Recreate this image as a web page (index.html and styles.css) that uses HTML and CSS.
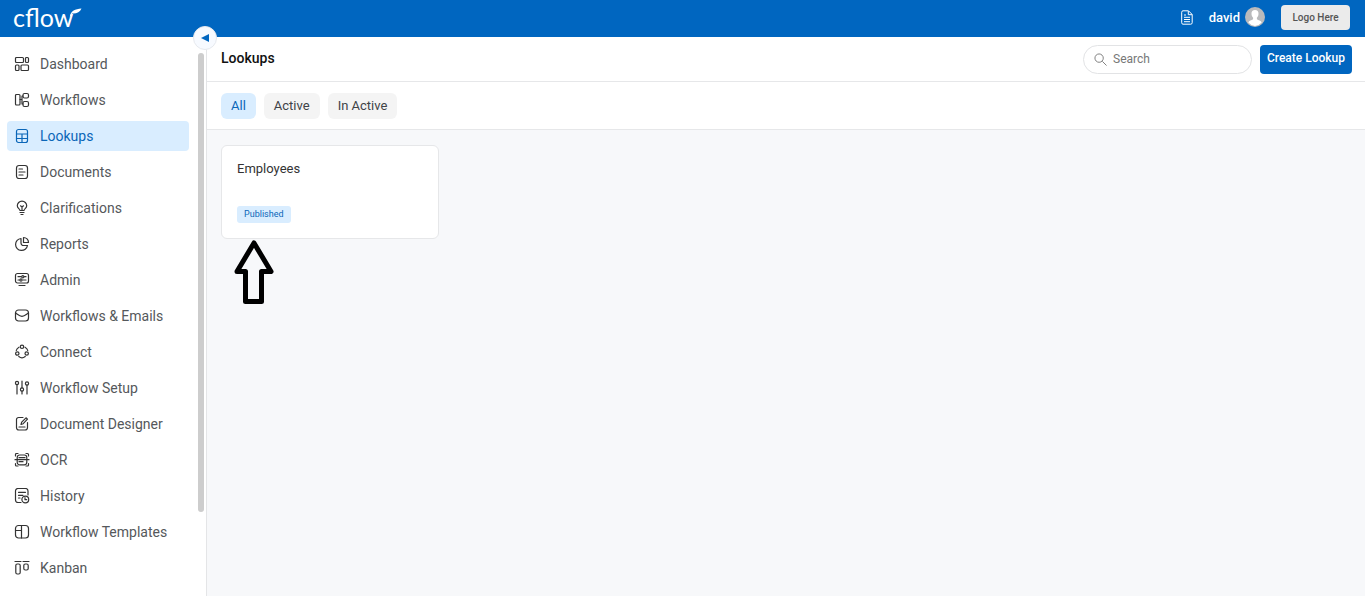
FILE: index.html
```html
<!DOCTYPE html>
<html lang="en">
<head>
<meta charset="utf-8">
<meta name="viewport" content="width=device-width, initial-scale=1">
<title>Lookups - cflow</title>
<link rel="stylesheet" href="styles.css">
</head>
<body>
<div class="app">
  <header class="topbar">
    <a class="brand" href="#" aria-label="cflow">
      <span class="brand-text">cflow</span>
      <svg class="brand-leaf" viewBox="0 0 12 9" aria-hidden="true"><path d="M0 8C1 3 5 1 11.500 .5C10 4.500 6 6 2 5.500L.8 8.500Z"/></svg>
    </a>
    <div class="account">
      <button class="doc-button" type="button" aria-label="Notes">
        <svg class="doc-icon" viewBox="0 0 12 15" aria-hidden="true"><path d="M2 .8h5.500l3.700 3.700v8.200a1.500 1.500 0 0 1-1.500 1.500H2A1.400 1.400 0 0 1 .7 12.700V2.200A1.400 1.400 0 0 1 2 .8ZM7.300 1v3.700H11M3 5h2M3 7.300h6M3 9.500h6M3 11.700h6"/></svg>
      </button>
      <button class="user" type="button">
        <span>david</span>
        <svg class="avatar" viewBox="0 0 20 20" aria-hidden="true"><circle cx="10" cy="10" r="10" fill="#b9babc"/><path d="M10 3c2.300 0 3.700 1.600 3.500 4-.1 1.700-.8 3-1.600 3.700v1.600c1.600 1 4 1.200 4.800 3.300A9.600 9.600 0 0 1 10 19a9.600 9.600 0 0 1-6.700-3.400c.8-2.100 3.200-2.300 4.800-3.300v-1.600C7.300 10 6.600 8.700 6.500 7 6.300 4.600 7.700 3 10 3Z" fill="#fff"/></svg>
      </button>
      <button class="logo-button" type="button">Logo Here</button>
    </div>
  </header>

  <div class="body">
    <aside class="sidebar">
      <nav class="nav" aria-label="Main">
        <a class="nav-item" href="#"><svg class="icon" viewBox="0 0 16 16" aria-hidden="true"><rect x="1.500" y="1.500" width="8" height="5" rx="1"/><rect x="11.500" y="1.500" width="3" height="5" rx="1"/><rect x="1.500" y="9" width="3.500" height="5.500" rx="1"/><rect x="7" y="9" width="7.500" height="5.500" rx="1"/></svg>Dashboard</a>
        <a class="nav-item" href="#"><svg class="icon" viewBox="0 0 16 16" aria-hidden="true"><rect x="1.500" y="2.500" width="4.500" height="10.500" rx="1"/><rect x="9" y="1.500" width="5.500" height="4.500" rx="1.500"/><rect x="9" y="9.500" width="5.500" height="5" rx="1.500"/><path d="M6 7.500h2V4h1M8 7.500V12h1"/></svg>Workflows</a>
        <a class="nav-item active" href="#" aria-current="page"><svg class="icon" viewBox="0 0 16 16" aria-hidden="true"><rect x="2.500" y="1.500" width="11" height="13" rx="2"/><path d="M2.500 6h11M2.500 10.500h11M8 6v8.500"/></svg>Lookups</a>
        <a class="nav-item" href="#"><svg class="icon" viewBox="0 0 16 16" aria-hidden="true"><rect x="2.500" y="1.500" width="11" height="13" rx="2.500"/><path d="M5 5h3.500M5 8h6M5 11h4"/></svg>Documents</a>
        <a class="nav-item" href="#"><svg class="icon" viewBox="0 0 16 16" aria-hidden="true"><path d="M6 10.500C5.800 8.700 3.300 8.400 3.300 5.800a4.700 4.700 0 0 1 9.400 0c0 2.600-2.500 2.900-2.700 4.700ZM8 10V7M6.500 5.800L8 7l1.500-1.200M6 12.500h4M7 14.500h2"/></svg>Clarifications</a>
        <a class="nav-item" href="#"><svg class="icon" viewBox="0 0 16 16" aria-hidden="true"><path d="M7 2.500A6 6 0 1 0 13.500 9.500H9.500A2.500 2.500 0 0 1 7 7ZM9.500 1.500v5h5c0-2.800-2.200-5-5-5Z"/></svg>Reports</a>
        <a class="nav-item" href="#"><svg class="icon" viewBox="0 0 16 16" aria-hidden="true"><rect x="1.500" y="1.500" width="13" height="9.500" rx="2"/><path d="M4 4.700h3M10.500 4.700H12M4 8h1.500M9 8h3M5 13.500h6"/><circle cx="8.800" cy="4.700" r="1.100"/><circle cx="7" cy="8" r="1.100"/></svg>Admin</a>
        <a class="nav-item" href="#"><svg class="icon" viewBox="0 0 16 16" aria-hidden="true"><rect x="1.500" y="2" width="13" height="11" rx="3"/><path d="M1.500 5c2 1 3.500 3.300 6.500 3.300S12.500 6 14.500 5"/></svg>Workflows &amp; Emails</a>
        <a class="nav-item" href="#"><svg class="icon" viewBox="0 0 16 16" aria-hidden="true"><circle cx="8" cy="2.800" r="1.700"/><circle cx="3.300" cy="9.500" r="1.700"/><circle cx="12.700" cy="9.500" r="1.700"/><path d="M5 3.200C3.500 4 2.500 5.300 2.300 6.500M11 3.200c1.500.8 2.500 2.100 2.700 3.300M4.800 12.500c1.800 1.500 4.600 1.500 6.400 0"/></svg>Connect</a>
        <a class="nav-item" href="#"><svg class="icon" viewBox="0 0 16 16" aria-hidden="true"><circle cx="3" cy="3" r="1.600"/><circle cx="8" cy="9.500" r="1.600"/><circle cx="13" cy="3.500" r="1.600"/><path d="M3 4.600V14M8 1v6.900M8 11.100V14M13 5.100V14"/></svg>Workflow Setup</a>
        <a class="nav-item" href="#"><svg class="icon" viewBox="0 0 16 16" aria-hidden="true"><path d="M9 1.500H4.500a2 2 0 0 0-2 2v8a2.500 2.500 0 0 0 2.500 2.500h6a2.500 2.500 0 0 0 2.500-2.500V6.500M5 11h6M7 8.500l.7-2.300L12 1.800l1.500 1.400-4.300 4.500Z"/></svg>Document Designer</a>
        <a class="nav-item" href="#"><svg class="icon" viewBox="0 0 16 16" aria-hidden="true"><path d="M1.500 4V2.500a1 1 0 0 1 1-1H4M12 1.500h1.500a1 1 0 0 1 1 1V4M1.500 11.500V13a1 1 0 0 0 1 1H4M12 14h1.500a1 1 0 0 0 1-1v-1.500M1 7.700h14M5 5.700h6M5 9.700h4"/><rect x="3.200" y="3" width="9.600" height="9.800" rx="2.500"/></svg>OCR</a>
        <a class="nav-item" href="#"><svg class="icon" viewBox="0 0 16 16" aria-hidden="true"><path d="M7 14.500H4a2.500 2.500 0 0 1-2.500-2.500V3A2.500 2.500 0 0 1 4 .5h7.500A2.500 2.500 0 0 1 14 3v4M4.500 4.300h7M4.500 7.300H9M4.500 10H6"/><circle cx="11.300" cy="11.500" r="3.400"/><path d="M11 9.700v2h1.700"/></svg>History</a>
        <a class="nav-item" href="#"><svg class="icon" viewBox="0 0 16 16" aria-hidden="true"><rect x="1.500" y="1.500" width="13" height="12.500" rx="3"/><path d="M7.500 1.500V14M1.500 6.500h6"/></svg>Workflow Templates</a>
        <a class="nav-item" href="#"><svg class="icon" viewBox="0 0 16 16" aria-hidden="true"><path d="M1 1.500h6M9 1.500h6"/><rect x="1.800" y="4" width="4.400" height="10" rx="1.500"/><rect x="9.800" y="4" width="4.400" height="6" rx="1.500"/></svg>Kanban</a>
      </nav>
      <div class="scroll-thumb" aria-hidden="true"></div>
      <button class="collapse" type="button" aria-label="Collapse menu"><svg class="collapse-icon" viewBox="0 0 8 8" aria-hidden="true"><path d="M0 4L8 0V8Z"/></svg></button>
    </aside>

    <main class="main">
      <div class="page-head">
        <h1 class="title">Lookups</h1>
        <div class="tools">
          <label class="search">
            <svg class="search-icon" viewBox="0 0 14 14" aria-hidden="true"><circle cx="5.500" cy="5.500" r="4.500"/><path d="M9 9L13.500 13.500"/></svg>
            <input class="search-input" type="text" placeholder="Search" aria-label="Search">
          </label>
          <button class="create" type="button">Create Lookup</button>
        </div>
      </div>
      <div class="tabs">
        <button class="tab selected" type="button" aria-pressed="true">All</button>
        <button class="tab" type="button" aria-pressed="false">Active</button>
        <button class="tab" type="button" aria-pressed="false">In Active</button>
      </div>
      <section class="content">
        <article class="card">
          <h2 class="card-title">Employees</h2>
          <span class="status">Published</span>
        </article>
        <svg class="pointer" viewBox="0 0 40 64" aria-hidden="true"><path d="M20 3L37 31.500H27.500V61.500H11.500V31.500H3Z"/></svg>
      </section>
    </main>
  </div>
</div>
</body>
</html>
```

FILE: styles.css
```css
* {
  box-sizing: border-box;
}

body {
  margin: 0;
  font-family: Roboto, "Liberation Sans", sans-serif;
  font-size: 14px;
  color: #333;
  background: #f7f8fa;
}

button,
input {
  font: inherit;
  border: 0;
  padding: 0;
  background: none;
}

a {
  text-decoration: none;
  color: inherit;
}

svg {
  display: block;
  flex: none;
}

.app {
  display: flex;
  flex-direction: column;
  height: 100vh;
  overflow: hidden;
}

.topbar {
  display: flex;
  flex: none;
  align-items: center;
  justify-content: space-between;
  height: 37px;
  padding: 0 15px 3px 13px;
  color: #fff;
  background: #0066c0;
}

.brand {
  display: flex;
  position: relative;
}

.brand-text {
  font-family: Lato, sans-serif;
  font-size: 25px;
  line-height: 32px;
}

.brand-leaf {
  position: absolute;
  top: 7px;
  right: -9px;
  width: 12px;
  height: 9px;
  fill: #fff;
}

.account,
.user {
  display: flex;
  align-items: center;
}

.user {
  gap: 5px;
  margin: 0 16px;
  font-size: 13px;
  font-weight: 500;
  color: #fff;
}

.doc-icon {
  width: 12px;
  height: 15px;
  fill: none;
  stroke: #fff;
}

.avatar {
  width: 20px;
  height: 20px;
}

.logo-button {
  width: 69px;
  height: 25px;
  border-radius: 4px;
  font-size: 10px;
  font-weight: 500;
  color: #555;
  background: #ebebeb;
}

.body {
  display: flex;
  flex: 1;
  min-height: 0;
}

.sidebar {
  display: flex;
  flex: none;
  position: relative;
  justify-content: space-between;
  width: 207px;
  padding: 12px 2px 0 7px;
  border-right: 1px solid #e4e5e7;
  background: #fff;
}

.nav {
  display: flex;
  flex-direction: column;
  gap: 6px;
  width: 182px;
}

.nav-item {
  display: flex;
  flex: none;
  align-items: center;
  gap: 10px;
  height: 30px;
  padding-left: 7px;
  border-radius: 4px;
  color: #55585b;
}

.nav-item.active {
  color: #0b66b8;
  background: #d9edff;
}

.icon {
  width: 16px;
  height: 16px;
  fill: none;
  stroke: #333;
  stroke-width: 1.2;
  stroke-linecap: round;
  stroke-linejoin: round;
}

.active .icon {
  stroke: #0b66b8;
}

.scroll-thumb {
  width: 6px;
  height: 84%;
  margin-top: 4px;
  border-radius: 3px;
  background: #cdcdcd;
}

.collapse {
  display: grid;
  position: absolute;
  top: -11px;
  right: -11px;
  width: 24px;
  height: 24px;
  place-items: center;
  border: 1px solid #e6e9ee;
  border-radius: 50%;
  background: #f7faff;
}

.collapse-icon {
  width: 8px;
  height: 8px;
  fill: #0066c0;
}

.main {
  display: flex;
  flex: 1;
  flex-direction: column;
  min-width: 0;
}

.page-head,
.tabs {
  display: flex;
  flex: none;
  align-items: center;
  padding: 0 13px 0 14px;
  border-bottom: 1px solid #e6e7e9;
  background: #fff;
}

.page-head {
  justify-content: space-between;
  height: 45px;
}

.title {
  margin: 0;
  padding-bottom: 2px;
  font-size: 14px;
  font-weight: 500;
  color: #111;
}

.tools {
  display: flex;
  gap: 8px;
}

.search {
  display: flex;
  align-items: center;
  gap: 6px;
  width: 169px;
  height: 29px;
  padding: 0 10px;
  border: 1px solid #e2e3e5;
  border-radius: 15px;
}

.search-icon {
  width: 13px;
  height: 13px;
  fill: none;
  stroke: #777;
}

.search-input {
  flex: 1;
  min-width: 0;
  outline: 0;
  font-size: 12px;
}

.search-input::placeholder {
  color: #777;
}

.create {
  width: 92px;
  height: 29px;
  padding-bottom: 3px;
  border-radius: 4px;
  font-size: 12px;
  font-weight: 500;
  color: #fff;
  background: #0066c0;
}

.tabs {
  gap: 8px;
  height: 48px;
}

.tab {
  height: 26px;
  padding: 0 10px;
  border-radius: 6px;
  font-size: 13px;
  color: #404347;
  background: #f4f4f4;
}

.tab.selected {
  color: #0b66b8;
  background: #d9edff;
}

.content {
  display: flex;
  flex-direction: column;
  align-items: flex-start;
  padding: 15px 14px;
}

.card {
  display: flex;
  flex-direction: column;
  align-items: flex-start;
  justify-content: space-between;
  width: 218px;
  height: 94px;
  padding: 15px;
  border: 1px solid #e6e7e9;
  border-radius: 6px;
  background: #fff;
}

.card-title {
  margin: 0;
  font-size: 13px;
  font-weight: 400;
}

.status {
  padding: 0 7px;
  border-radius: 3px;
  font-size: 9px;
  line-height: 17px;
  color: #0b66b8;
  background: #d9edff;
}

.pointer {
  width: 40px;
  height: 64px;
  margin: 1px 0 0 13px;
  fill: none;
  stroke: #000;
  stroke-width: 5px;
  stroke-linejoin: round;
}
```
